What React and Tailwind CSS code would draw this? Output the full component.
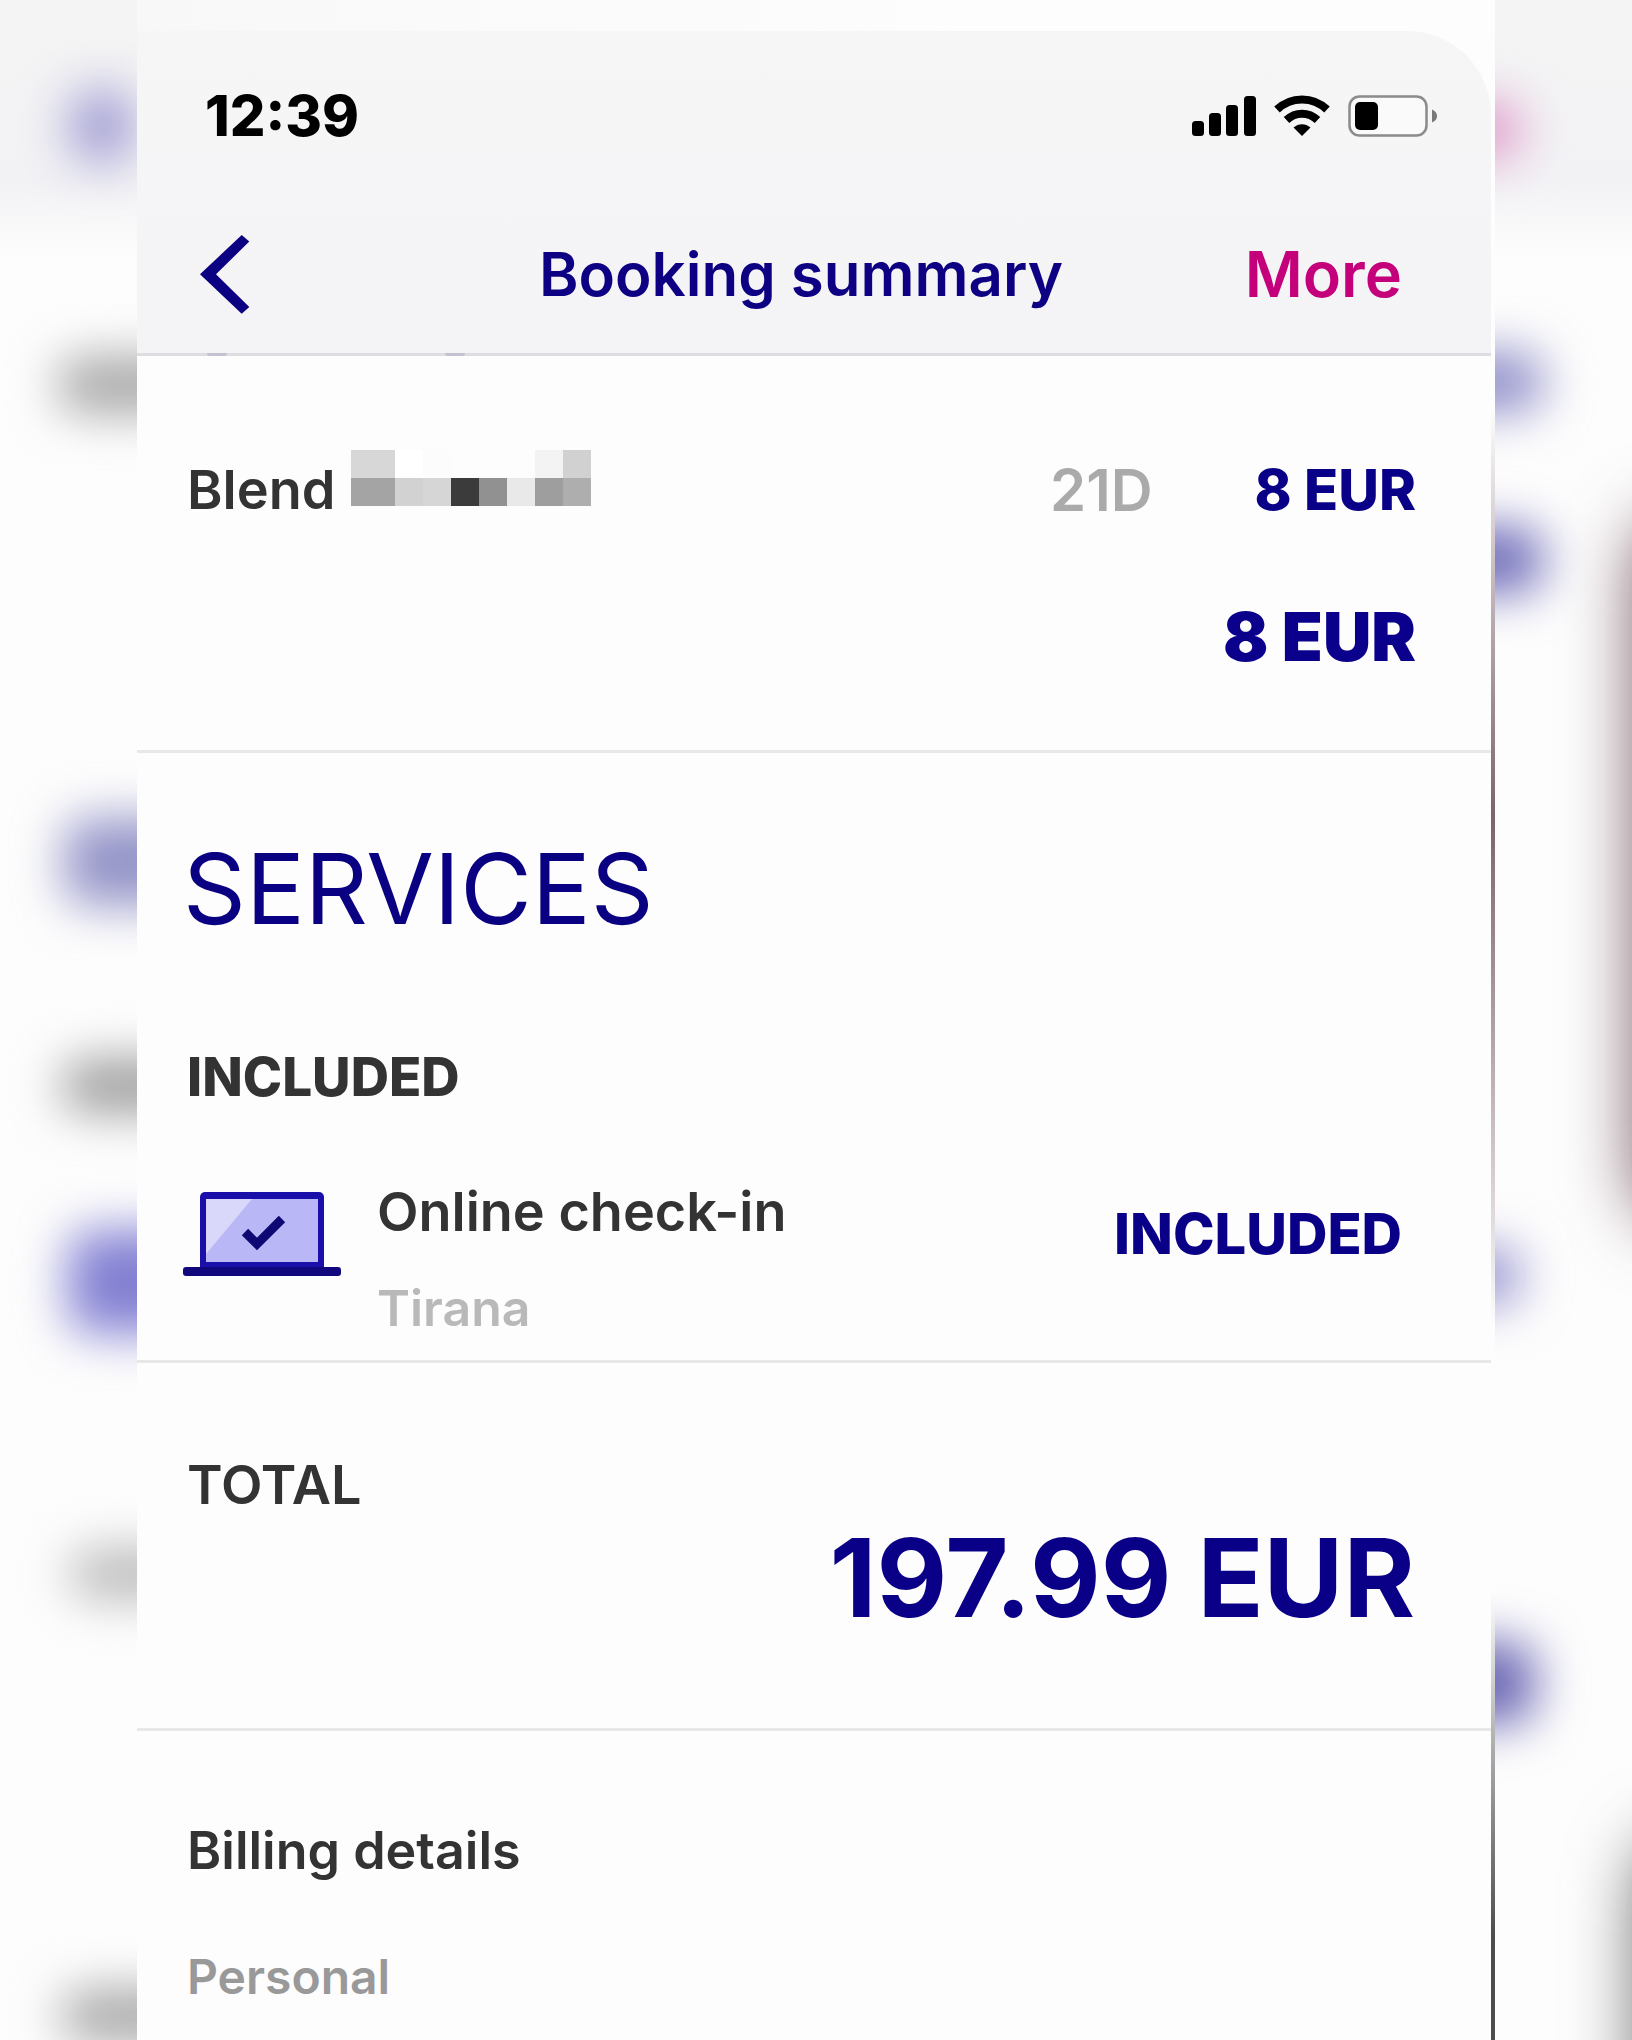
const redactedTop = ['bg-[#d7d7d7]', 'bg-white', 'bg-[#fcfcfc]', 'bg-[#fdfdfd]', 'bg-[#fdfdfd]', 'bg-[#fdfdfd]', 'bg-[#f3f3f3]', 'bg-[#d1d1d1]']
const redactedBottom = ['bg-[#a4a4a4]', 'bg-[#d2d2d2]', 'bg-[#d6d6d6]', 'bg-[#3b3b3b]', 'bg-[#919191]', 'bg-[#e9e9e9]', 'bg-[#9e9e9e]', 'bg-[#aeaeae]']

// soft coloured spots behind the sheet
const leftSpots = [
    'top-[90px] left-[70px] h-[72px] w-[64px] bg-[#a19dd2]',
    'top-[357px] left-[58px] h-[56px] w-[160px] bg-[#a6a6a6]',
    'top-[818px] left-[64px] h-[88px] w-[160px] bg-[#9494c8]',
    'top-[1060px] left-[62px] h-[52px] w-[160px] bg-[#9a9a9a]',
    'top-[1230px] left-[68px] h-[104px] w-[160px] bg-[#8380d2]',
    'top-[1549px] left-[70px] h-[50px] w-[160px] bg-[#b9b9b9]',
    'top-[1990px] left-[62px] h-[52px] w-[160px] bg-[#a5a5a5]',
]

const rightSpots = [
    'top-[102px] -left-16 h-[56px] w-[90px] bg-[#de98c8]',
    'top-[352px] -left-16 h-[60px] w-[112px] bg-[#8e8dc8]',
    'top-[527px] -left-16 h-[66px] w-[112px] bg-[#6e6bb8]',
    'top-[1246px] -left-16 h-[60px] w-[90px] bg-[#9996d0]',
    'top-[1642px] -left-16 h-[82px] w-[104px] bg-[#6a66b3]',
]

const Backdrop = ({ spots, children }) => (
    <div aria-hidden="true" className="relative min-w-0 flex-1 overflow-hidden bg-linear-to-b from-[#f4f4f4] via-[#f2f2f5] via-[180px] to-[#fdfdfd] to-[260px]">
        {spots.map((spot) => (
            <div key={spot} className={`absolute rounded-3xl blur-[24px] ${spot}`} />
        ))}
        {children}
    </div>
)

const SignalIcon = () => (
    <svg width="64" height="42" viewBox="0 0 64 42" aria-hidden="true">
        <rect x="0" y="26" width="12" height="15" rx="3.5" />
        <rect x="17" y="18" width="12" height="23" rx="3.5" />
        <rect x="34" y="10" width="12" height="31" rx="3.5" />
        <rect x="52" y="1" width="12" height="40" rx="3.5" />
    </svg>
)

const WifiIcon = () => (
    <svg width="56" height="42" viewBox="0 0 56 42" fill="none" stroke="#000" aria-hidden="true">
        <path d="M3 14.5C17 1 39 1 53 14.5" strokeWidth="8" />
        <path d="M12.5 25C21.5 16.5 34.5 16.5 43.5 25" strokeWidth="8" />
        <path d="M19.5 32.5C24.5 28 31.5 28 36.5 32.5L28 41Z" fill="#000" stroke="none" />
    </svg>
)

const BatteryIcon = () => (
    <svg width="90" height="42" viewBox="0 0 90 42" aria-hidden="true">
        <rect x="1.5" y="1.5" width="77" height="39" rx="10" fill="#fafafa" stroke="#8b8b8b" strokeWidth="2.5" />
        <rect x="7" y="7" width="23" height="28" rx="5" />
        <path d="M84 14.5Q89 16.5 89 21T84 27.5Z" fill="#7a7a7a" />
    </svg>
)

const LaptopIcon = () => (
    <svg width="158" height="84" viewBox="0 0 158 84" aria-hidden="true">
        <rect x="17" y="0" width="124" height="80" rx="5" fill="#1a0fa8" />
        <rect x="23" y="7" width="112" height="63" fill="#b9b7f5" />
        <path d="M23 7H69L23 62Z" fill="#d9d7fa" />
        <path d="M62 40L74 52L99 27" fill="none" stroke="#0d0873" strokeWidth="9" />
        <rect x="0" y="75" width="158" height="9" rx="3" fill="#12087e" />
    </svg>
)

const Header = () => (
    <header className="bg-linear-to-r from-[#f8f8f8] to-[#fdfdfd] to-60% pt-[31px]">
        <div className="rounded-tr-[84px] bg-linear-to-b from-[#f6f6f7] to-[#f4f4f6] pt-[45px]">
            <div className="flex h-20 items-center justify-between pr-[53px] pl-[68px]">
                <time className="text-[56px] leading-none font-extrabold text-black">12:39</time>
                <div className="flex items-center gap-[18px]">
                    <SignalIcon />
                    <WifiIcon />
                    <BatteryIcon />
                </div>
            </div>
            <div className="mt-[39px] grid h-[158px] grid-cols-[1fr_auto_1fr] items-center pr-[89px] pl-[63px]">
                <button type="button" aria-label="Back" className="justify-self-start">
                    <svg width="50" height="79" viewBox="0 0 50 79" fill="#0b0081">
                        <path d="M0 39.3L41.7 0L49.3 6.5L16 39.3L49.3 72L41.7 78.7Z" />
                    </svg>
                </button>
                <h1 className="text-[60px] leading-none font-semibold text-[#0e0082]">Booking summary</h1>
                <button type="button" className="justify-self-end text-[63px] leading-none font-semibold text-[#c4007b]">More</button>
            </div>
        </div>
        {/* bottoms of the text scrolled under the bar */}
        <div className="flex h-[3px] gap-[218px] bg-[#dedee2] pl-[70px]">
            <div className="w-5 rounded-b bg-[#c3c1d2]" />
            <div className="w-5 rounded-b bg-[#c3c1d2]" />
        </div>
    </header>
)

const RedactedName = () => (
    <div className="grid h-14 grid-cols-[44px_repeat(7,28px)] grid-rows-2 self-start">
        {[...redactedTop, ...redactedBottom].map((shade, i) => (
            <div key={i} className={shade} />
        ))}
    </div>
)

export default function App() {
    return (
        <div className="flex min-h-screen bg-[#fdfdfd] font-['Inter',sans-serif] text-[54px] text-[#333333]">
            <Backdrop spots={leftSpots} />
            <main className="flex w-5/6 max-w-[1358px] bg-[#fdfdfd]">
                <div className="min-w-0 flex-1">
                    <Header />
                    <section className="border-b-[3px] border-[#e8e8e8] pt-[94px] pr-[75px] pb-[73px] pl-[50px]">
                        <div className="flex h-20 items-center">
                            <span className="leading-none font-semibold">Blend</span>
                            <span className="w-4" />
                            <RedactedName />
                            <span className="ml-auto text-[58px] leading-none font-semibold text-[#aaaaaa]">21D</span>
                            <span className="ml-[102px] text-[56px] leading-none font-extrabold text-[#0a0087]">8 EUR</span>
                        </div>
                        <p className="mt-[67px] text-right text-[67px] leading-[80px] font-black text-[#0a008c]">8 EUR</p>
                    </section>
                    <section className="border-b-[3px] border-[#e8e8e8] pt-[76px] pr-[89px] pb-[22px] pl-[46px]">
                        <h2 className="text-[98px] leading-[120px] font-normal text-[#0a0082]">SERVICES</h2>
                        <h3 className="mt-[98px] pl-1 text-[53px] leading-[60px] font-extrabold">INCLUDED</h3>
                        <div className="mt-[75px] flex">
                            <div className="flex h-[104px] items-center">
                                <LaptopIcon />
                            </div>
                            <div className="ml-[36px] leading-[60px] font-semibold">
                                <p>Online check-in</p>
                                <p className="mt-9 text-[50px] text-[#b9b9b9]">Tirana</p>
                            </div>
                            <div className="ml-auto flex h-[104px] items-center text-[56px] font-extrabold text-[#0a0087]">INCLUDED</div>
                        </div>
                    </section>
                    <section className="border-b-[3px] border-[#e8e8e8] pt-[92px] pr-[76px] pb-[91px] pl-[50px]">
                        <h3 className="leading-[60px] font-semibold">TOTAL</h3>
                        <p className="mt-0.5 text-right text-[109px] leading-[120px] font-bold text-[#0a0087]">197.99 EUR</p>
                    </section>
                    <section className="pt-[90px] pb-[33px] pl-[50px] text-[52px] leading-[60px] font-semibold">
                        <h3>Billing details</h3>
                        <p className="mt-[66px] text-[48px] text-[#999999]">Personal</p>
                    </section>
                </div>
                <div className="w-1 bg-linear-to-b from-[#fdfdfd] from-20% via-[#7d646c] via-40% to-[#fdfdfd] to-65%">
                    <div className="h-full bg-linear-to-b from-transparent from-78% to-[#4c4c4c] to-95%" />
                </div>
            </main>
            <Backdrop spots={rightSpots}>
                <div className="absolute top-[520px] left-[144px] h-[700px] w-[90px] rounded-[40px] bg-[#6b4a55] blur-[36px]" />
                <div className="absolute top-[1840px] left-[148px] h-[400px] w-[90px] rounded-[40px] bg-[#555555] blur-[36px]" />
            </Backdrop>
        </div>
    )
}
